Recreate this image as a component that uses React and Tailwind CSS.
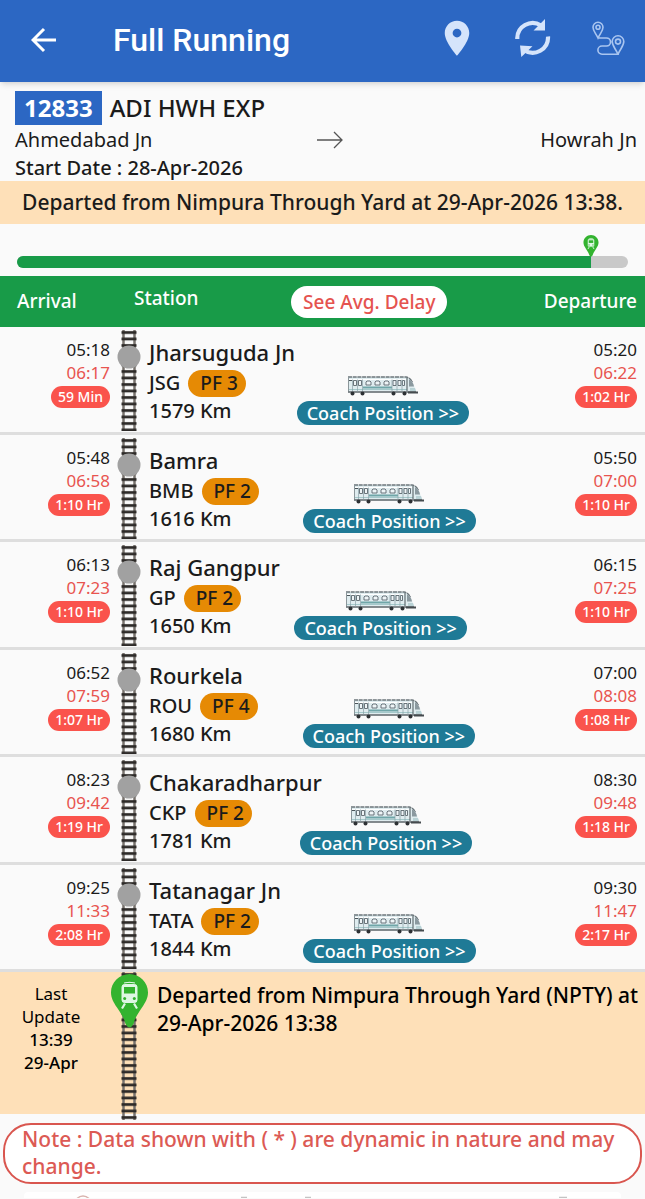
const stations = [
  { name: 'Jharsuguda Jn', code: 'JSG', pf: 'PF 3', km: 1579, arr: ['05:18', '06:17', '59 Min'], dep: ['05:20', '06:22', '1:02 Hr'] },
  { name: 'Bamra', code: 'BMB', pf: 'PF 2', km: 1616, arr: ['05:48', '06:58', '1:10 Hr'], dep: ['05:50', '07:00', '1:10 Hr'] },
  { name: 'Raj Gangpur', code: 'GP', pf: 'PF 2', km: 1650, arr: ['06:13', '07:23', '1:10 Hr'], dep: ['06:15', '07:25', '1:10 Hr'] },
  { name: 'Rourkela', code: 'ROU', pf: 'PF 4', km: 1680, arr: ['06:52', '07:59', '1:07 Hr'], dep: ['07:00', '08:08', '1:08 Hr'] },
  { name: 'Chakaradharpur', code: 'CKP', pf: 'PF 2', km: 1781, arr: ['08:23', '09:42', '1:19 Hr'], dep: ['08:30', '09:48', '1:18 Hr'] },
  { name: 'Tatanagar Jn', code: 'TATA', pf: 'PF 2', km: 1844, arr: ['09:25', '11:33', '2:08 Hr'], dep: ['09:30', '11:47', '2:17 Hr'] },
];

const journeyDone = 94;

const BackIcon = () => (
  <svg width="26" height="26" viewBox="0 0 26 26" fill="none" stroke="white" strokeWidth="3">
    <path d="M25 13H2.500M13 2L2 13l11 11" />
  </svg>
);

const PlaceIcon = () => (
  <svg width="42" height="42" viewBox="0 0 24 24" fill="#d5e4fb">
    <path d="M12 1C8.130 1 5 4.130 5 8c0 5.250 7 13 7 13s7-7.750 7-13c0-3.870-3.130-7-7-7zm0 9.500a2.500 2.500 0 1 1 0-5 2.500 2.500 0 0 1 0 5z" />
  </svg>
);

const RefreshIcon = () => (
  <svg width="36" height="42" viewBox="0 0 36 42" fill="none">
    <path d="M2.300 20A15.300 15.300 0 0 1 26 6.500M33 17.500A15.300 15.300 0 0 1 9 31" stroke="#d5e4fb" strokeWidth="4.200" />
    <path d="M30 0V11.500H18.500zM5 26.500l12.500.7L6.300 38z" fill="#d5e4fb" />
  </svg>
);

const RouteIcon = () => (
  <svg width="36" height="40" viewBox="0 0 36 40" fill="none" stroke="#a9c5f0" strokeWidth="1.600">
    <path d="M7 18C5 13.500 2 11 2 7.300a5 5 0 0 1 10 0C12 11 9 13.500 7 18zH15.500a4 4 0 0 1 0 8H11a4 4 0 0 0 0 8.200H27M7 18H15.500a4 4 0 0 1 0 8H11a4 4 0 0 0 0 8.200H27C24.500 28.500 21.200 26 21.200 21.600a5.800 5.800 0 0 1 11.600 0C32.800 26 29.500 28.500 27 34.200" />
    <circle cx="7" cy="7.300" r="2" />
    <circle cx="27" cy="21.600" r="2.500" />
  </svg>
);

const TrainPin = ({ className }) => (
  <svg className={className} viewBox="0 0 37 54">
    <path d="M18.500 0C8.300 0 0 8.300 0 18.500 0 24 2.600 28.500 6 33.500 10.500 40.500 13 43.500 14.500 50q4 7 8 0C24 43.500 26.500 40.500 31 33.500 34.400 28.500 37 24 37 18.500 37 8.300 28.700 0 18.500 0z" fill="#33b32f" />
    <path d="M13 9q5.500-1.500 11 0M11 13q0-2.500 2.500-2.500h10q2.500 0 2.500 2.500v13q0 2.500-2.500 2.500h-10q-2.500 0-2.500-2.500z" fill="#def7e4" stroke="#def7e4" />
    <path d="M13 13h11v6.500H13z" fill="#33b32f" />
    <circle cx="13.700" cy="24.500" r="1.500" fill="#33b32f" />
    <circle cx="23.300" cy="24.500" r="1.500" fill="#33b32f" />
    <path d="M14 29.500l-3 5M23 29.500l3 5" stroke="#def7e4" strokeWidth="2.200" />
  </svg>
);

const Track = ({ height, dot }) => (
  <svg width="24" height={height} className="mx-auto block">
    <defs>
      <pattern id="sleepers" width="24" height="6.500" patternUnits="userSpaceOnUse">
        <path d="M6.500 0v6.500M17.500 0v6.500" stroke="#77726d" strokeWidth="2.500" />
        <path d="M4.500 2.500h15" stroke="#2d2a28" strokeWidth="2.800" />
      </pattern>
    </defs>
    <rect width="24" height={height} fill="url(#sleepers)" />
    {dot && <circle cx="12" cy="27" r="11.500" fill="#a1a1a1" />}
  </svg>
);

const CoachIcon = () => (
  <svg width="70" height="20" viewBox="0 0 70 20">
    <path d="M.5 1H58c5 1 8 7 10 14.500H.5z" fill="#dfecef" />
    <path d="M0 1h58c3 .5 5 2.500 6.500 5" fill="none" stroke="#6c767b" strokeWidth="1.300" strokeDasharray="4 .7" />
    <path d="M1 3.500h57" stroke="#fff" strokeWidth="1" />
    <path d="M.5 1v14.500" stroke="#8b969a" />
    <path d="M15 11.500h29" stroke="#6fa6a8" strokeWidth="2" />
    <path d="M1 13.500h58" stroke="#a5c9cb" />
    <path d="M0 16h68" stroke="#5b6468" strokeWidth="1.500" />
    <g fill="#eef5f7" stroke="#5b676d" strokeWidth=".9">
      <path d="M5.500 4.500h3v5h-3zM10.500 4.500h3v5h-3zM45 4.500h3v5h-3zM50 4.500h3v5h-3zM54.500 4.500h2v5h-2z" />
      <path d="M18 9V6l1-1h3l1 1v3zM27 9V6l1-1h3l1 1v3zM36 9V6l1-1h3l1 1v3z" />
    </g>
    <path d="M4.500 3.500v12M9.500 3.500v12M14.500 3.500v12M44 3.500v12M49 3.500v12M54 3.500v12" stroke="#8ba0a7" strokeWidth=".7" />
    <path d="M1 4.500h3M59 2v13" stroke="#4a5459" />
    <path d="M61 3.500c3 1 4.500 4 5 7h-5z" fill="#8b999f" />
    <path d="M62 12h5l1 3h-6z" fill="#b9d2d5" />
    <path d="M60 16.500h10" stroke="#454b4e" strokeWidth="2" />
    <g fill="#2d3134">
      <circle cx="4.500" cy="17.500" r="2" />
      <circle cx="14.500" cy="17.500" r="2" />
      <circle cx="45.500" cy="17.500" r="2" />
      <circle cx="56.500" cy="17.500" r="2" />
    </g>
  </svg>
);

const Times = ({ times }) => {
  const [scheduled, actual, delay] = times;
  return (
    <div className="flex flex-col items-end pt-[11px] text-[17px] leading-[23px]">
      <span>{scheduled}</span>
      <span className="text-[#e8544f]">{actual}</span>
      <span className="mt-0.5 rounded-full bg-[#fa534c] px-[7px] text-sm leading-[22px] font-medium text-white">{delay}</span>
    </div>
  );
};

const StationRow = ({ station }) => (
  <tr className="align-top odd:h-[108px] even:h-[107px]">
    <td className="border-b-3 border-[#dedede]">
      <Times times={station.arr} />
    </td>
    <td className="border-b-3 border-[#dedede] pt-[3px]">
      <Track height={101} dot />
    </td>
    <td className="border-b-3 border-[#dedede] pt-2 pl-px font-medium">
      <div className="text-[22px] leading-[34px]">{station.name}</div>
      <div className="flex">
        <div className="text-xl leading-7">
          <div className="flex items-center gap-2">
            {station.code}
            <span className="rounded-full bg-[#e68a04] pr-2 pl-3 text-[19px] leading-[27px]">{station.pf}</span>
          </div>
          <div>{station.km} Km</div>
        </div>
        <div className="flex flex-1 flex-col items-center gap-[5px] pt-[7px]">
          <CoachIcon />
          <button type="button" className="rounded-full bg-[#1f7a96] px-2.5 text-lg leading-6 whitespace-nowrap text-white">
            Coach Position &gt;&gt;
          </button>
        </div>
      </div>
    </td>
    <td className="border-b-3 border-[#dedede] pr-2">
      <Times times={station.dep} />
    </td>
  </tr>
);

export default function App() {
  return (
    <div className="min-h-screen bg-[#fafafa] font-['Noto_Sans',sans-serif] text-[#1b1b1b]">
      <header className="relative flex h-[82px] items-center bg-[#2c67c3] pr-3 pb-0.5 pl-[31px] shadow-md">
        <button type="button" aria-label="Back">
          <BackIcon />
        </button>
        <h1 className="ml-14 flex-1 font-['Roboto',sans-serif] text-[32px] font-medium text-white">Full Running</h1>
        <div className="flex gap-7">
          <button type="button" aria-label="Locate train" className="flex w-12 items-center justify-center">
            <PlaceIcon />
          </button>
          <button type="button" aria-label="Refresh" className="flex w-12 items-center justify-center">
            <RefreshIcon />
          </button>
          <button type="button" aria-label="Route map" className="flex w-12 items-center justify-center">
            <RouteIcon />
          </button>
        </div>
      </header>

      <section className="px-2 pt-[9px] pl-[15px] text-xl leading-7">
        <div className="flex items-center gap-2 text-2xl leading-[34px] font-medium">
          <span className="bg-[#2c67c3] px-[9px] font-bold text-white">12833</span>
          <span>ADI HWH EXP</span>
        </div>
        <div className="flex items-center justify-between pt-px">
          <span className="flex-1">Ahmedabad Jn</span>
          <svg width="26" height="18" viewBox="0 0 26 18" fill="none" stroke="#555" strokeWidth="1.300" className="ml-2">
            <path d="M0 9h25M17 1l8 8-8 8" />
          </svg>
          <span className="flex-1 text-right">Howrah Jn</span>
        </div>
        <p className="leading-[27px] font-medium">Start Date : 28-Apr-2026</p>
      </section>

      <p className="bg-[#fee0b8] text-center text-[21px] leading-[43px] font-medium">
        Departed from Nimpura Through Yard at 29-Apr-2026 13:38.
      </p>

      <div className="px-[17px] pt-8 pb-2">
        <div className="relative h-3 rounded-full bg-[#c9c9c9]">
          <div className="h-3 rounded-l-full bg-[#189b48]" style={{ width: `${journeyDone}%` }} />
          <div className="absolute bottom-[11px] -translate-x-1/2" style={{ left: `${journeyDone}%` }}>
            <TrainPin className="h-[22px] w-[18px]" />
          </div>
        </div>
      </div>

      <table className="w-full table-fixed border-separate border-spacing-0">
        <colgroup>
          <col className="w-[110px]" />
          <col className="w-[38px]" />
          <col />
          <col className="w-[125px]" />
        </colgroup>
        <thead className="bg-[#189b48] text-[19px] text-white">
          <tr className="h-[51px]">
            <th className="pl-[17px] text-left font-medium">Arrival</th>
            <th colSpan={2} className="pl-6 font-medium">
              <div className="flex items-center">
                <span className="pb-1.5">Station</span>
                <div className="flex flex-1 justify-center pl-5">
                  <button type="button" className="rounded-full bg-white px-3 leading-8 text-[#e5534f]">
                    See Avg. Delay
                  </button>
                </div>
              </div>
            </th>
            <th className="pr-2 text-right font-medium">Departure</th>
          </tr>
        </thead>
        <tbody>
          {stations.map((station) => (
            <StationRow key={station.code} station={station} />
          ))}
        </tbody>
      </table>

      <section className="flex bg-[#fee0b8] text-black">
        <div className="w-[110px] pt-2.5 pr-4 pl-2 text-center text-[17px] leading-[23px]">
          <p>Last</p>
          <p>Update</p>
          <p className="font-medium">13:39</p>
          <p className="font-medium">29-Apr</p>
        </div>
        <div className="relative -mb-1.5 w-[38px]">
          <Track height={148} />
          <div className="absolute inset-x-0 top-0.5">
            <TrainPin className="mx-auto h-[54px] w-[37px]" />
          </div>
        </div>
        <p className="flex-1 pt-[9px] pl-[9px] text-[21px] leading-7 font-medium">
          Departed from Nimpura Through Yard (NPTY) at 29-Apr-2026 13:38
        </p>
      </section>

      <p className="mx-[3px] mt-[9px] rounded-[28px] border-2 border-[#d9564f] bg-white px-[17px] pt-px pb-0.5 text-[21px] leading-[27px] font-medium text-[#dc5a54]">
        Note : Data shown with ( * ) are dynamic in nature and may change.
      </p>

      {/* top edge of the next card */}
      <div className="mx-6 mt-2 h-1.5 overflow-hidden rounded-t bg-white">
        <svg width="100%" height="6" fill="none" strokeWidth="1.500">
          <circle cx="59" cy="12" r="8" stroke="#d9b3ad" />
          <path d="M217 5.500h6M281 5.500h6M535 5.500h8" stroke="#c4c4c4" />
        </svg>
      </div>
    </div>
  );
}
